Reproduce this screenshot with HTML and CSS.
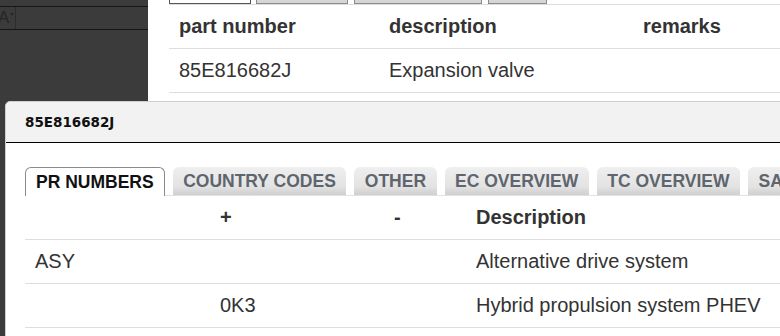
FILE: index.html
```html
<!DOCTYPE html>
<html lang="en">
<head>
    <meta charset="UTF-8">
    <meta name="viewport" content="width=device-width, initial-scale=1.0">
    <title>Part details</title>
    <link rel="stylesheet" href="styles.css">
</head>
<body>
    <div class="page">
        <aside class="sidebar">
            <div class="toolbar">
                <span class="font-pick">A<span class="caret"></span></span>
            </div>
        </aside>
        <main class="main">
            <div class="tabstrip">
                <span class="stub stub-active"></span>
                <span class="stub stub-1"></span>
                <span class="stub stub-2"></span>
                <span class="stub stub-3"></span>
            </div>
            <table class="data-table parts-table">
                <thead>
                    <tr>
                        <th class="col-part">part number</th>
                        <th class="col-desc">description</th>
                        <th>remarks</th>
                    </tr>
                </thead>
                <tbody>
                    <tr>
                        <td>85E816682J</td>
                        <td>Expansion valve</td>
                        <td></td>
                    </tr>
                </tbody>
            </table>
        </main>
    </div>

    <div class="modal">
        <div class="modal-header">85E816682J</div>
        <div class="modal-body">
            <ul class="tabs">
                <li class="tab active">PR NUMBERS</li>
                <li class="tab">COUNTRY CODES</li>
                <li class="tab">OTHER</li>
                <li class="tab">EC OVERVIEW</li>
                <li class="tab">TC OVERVIEW</li>
                <li class="tab">SA OVERVIEW</li>
            </ul>
            <table class="data-table pr-table">
                <thead>
                    <tr>
                        <th class="col-family"></th>
                        <th class="col-plus">+</th>
                        <th class="col-minus">-</th>
                        <th>Description</th>
                    </tr>
                </thead>
                <tbody>
                    <tr>
                        <td>ASY</td>
                        <td></td>
                        <td></td>
                        <td>Alternative drive system</td>
                    </tr>
                    <tr>
                        <td></td>
                        <td>0K3</td>
                        <td></td>
                        <td>Hybrid propulsion system PHEV</td>
                    </tr>
                </tbody>
            </table>
        </div>
    </div>
</body>
</html>
```

FILE: styles.css
```css
body {
    margin: 0;
    padding: 0;
    width: 780px;
    height: 336px;
    overflow: hidden;
    position: relative;
    font-family: "Liberation Sans", Arial, sans-serif;
    color: #333;
    background: #fff;
}

.page {
    display: flex;
    height: 336px;
}

.sidebar {
    width: 148px;
    flex-shrink: 0;
    background: #3b3b3b;
    padding-top: 6px;
}

.toolbar {
    height: 22px;
    border-top: 1px solid #151515;
    border-bottom: 1px solid #151515;
    display: flex;
}

.font-pick {
    width: 15px;
    border-right: 1px solid #2c2c2c;
    font-size: 17px;
    line-height: 22px;
    color: #262626;
    text-indent: -2px;
    overflow: hidden;
    position: relative;
}

.caret {
    position: absolute;
    right: 1px;
    top: 6px;
    border-left: 2px solid transparent;
    border-right: 2px solid transparent;
    border-top: 3px solid #262626;
}

.main {
    flex: 1;
    padding-left: 21px;
    overflow: hidden;
}

.tabstrip {
    display: flex;
    gap: 5px;
    height: 4px;
    border-bottom: 1px solid #ddd;
}

.stub {
    height: 3px;
    background: #d6d6d6;
    border: 1px solid #8c8c8c;
    border-top: none;
}

.stub-active {
    width: 80px;
    background: #fff;
    border-color: #555;
}

.stub-1 { width: 90px; }
.stub-2 { width: 126px; margin-left: 1px; }
.stub-3 { width: 57px; margin-left: 1px; }

.data-table {
    border-collapse: collapse;
    font-size: 20px;
    text-align: left;
}

.data-table th,
.data-table td {
    height: 43px;
    padding: 0 10px;
    border-bottom: 1px solid #ddd;
    vertical-align: middle;
    white-space: nowrap;
}

.data-table th {
    font-weight: bold;
}

.parts-table {
    width: 700px;
}

.parts-table .col-part { width: 190px; }
.parts-table .col-desc { width: 234px; }

.modal {
    position: absolute;
    left: 5px;
    top: 101px;
    width: 800px;
    height: 260px;
    background: #fff;
    border: 1px solid #cfcfcf;
    border-radius: 5px 0 0 0;
}

.modal-header {
    height: 40px;
    line-height: 40px;
    padding-left: 19px;
    background: #f2f2f2;
    border-bottom: 1px solid #000;
    border-radius: 5px 0 0 0;
    font-family: "DejaVu Sans", Verdana, sans-serif;
    font-size: 13.5px;
    font-weight: bold;
    color: #111;
}

.modal-body {
    padding: 24px 0 0 19px;
}

.tabs {
    list-style: none;
    margin: 0;
    padding: 0;
    display: flex;
    gap: 8px;
    border-bottom: 1px solid #e2e2e2;
}

.tab {
    height: 28px;
    line-height: 29px;
    padding: 0 10.5px;
    font-size: 17.5px;
    font-weight: bold;
    color: #5e656d;
    white-space: nowrap;
    border-radius: 6px 6px 0 0;
    background: linear-gradient(#efefef, #e3e3e3 70%, #cfcfcf);
}

.tab.active {
    height: 27px;
    line-height: 28px;
    padding: 0 10px;
    color: #111;
    background: #fff;
    border: 1px solid #8a8a8a;
    border-bottom: none;
    margin-bottom: -1px;
    padding-bottom: 1px;
}

.pr-table {
    width: 780px;
}

.pr-table .col-family { width: 165px; }
.pr-table .col-plus { width: 154px; }
.pr-table .col-minus { width: 62px; }
```
